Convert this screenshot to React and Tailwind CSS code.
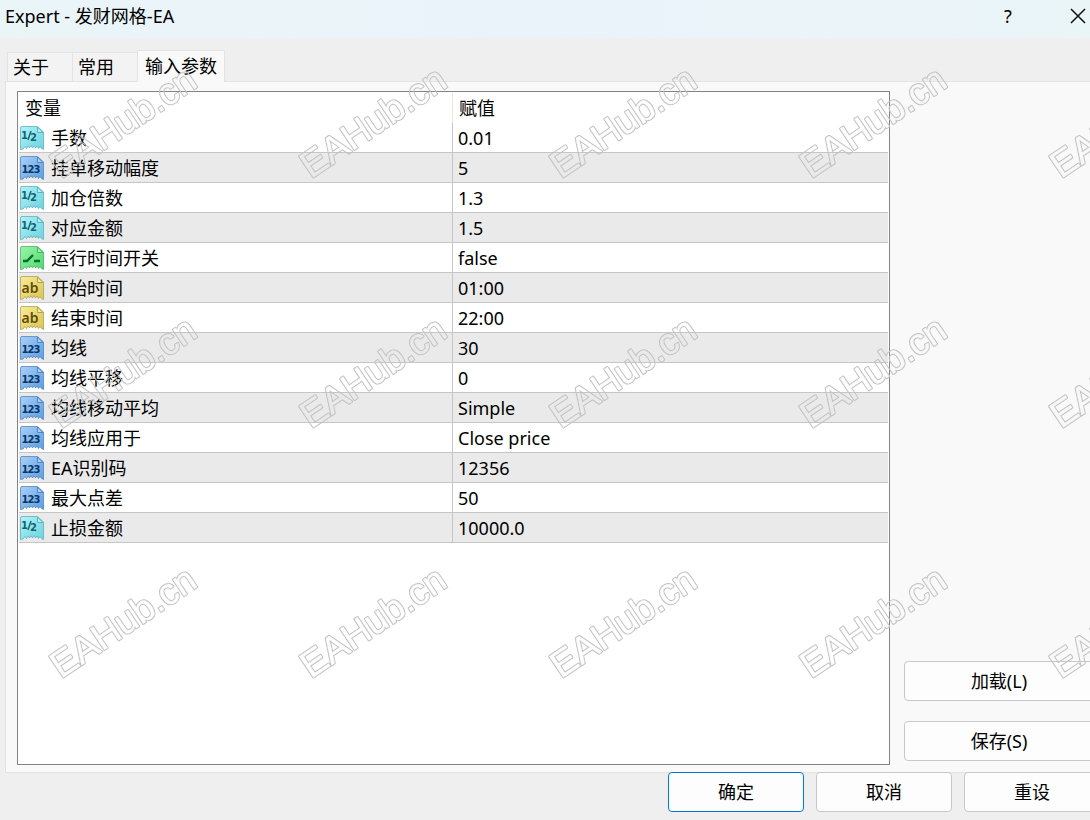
import React, { useState } from 'react';

const tabs = ['关于', '常用', '输入参数'];

const params = [
    { name: '手数', value: '0.01', type: 'double' },
    { name: '挂单移动幅度', value: '5', type: 'int' },
    { name: '加仓倍数', value: '1.3', type: 'double' },
    { name: '对应金额', value: '1.5', type: 'double' },
    { name: '运行时间开关', value: 'false', type: 'bool' },
    { name: '开始时间', value: '01:00', type: 'string' },
    { name: '结束时间', value: '22:00', type: 'string' },
    { name: '均线', value: '30', type: 'int' },
    { name: '均线平移', value: '0', type: 'int' },
    { name: '均线移动平均', value: 'Simple', type: 'int' },
    { name: '均线应用于', value: 'Close price', type: 'int' },
    { name: 'EA识别码', value: '12356', type: 'int' },
    { name: '最大点差', value: '50', type: 'int' },
    { name: '止损金额', value: '10000.0', type: 'double' },
];

const iconColors = {
    double: { light: '#b4f1f7', dark: '#6bd3df', edge: '#5fb2bf', ink: '#0d6672' },
    int: { light: '#a9d0f8', dark: '#5b9ee2', edge: '#5585bd', ink: '#0c3566' },
    bool: { light: '#9af5a8', dark: '#4ed872', edge: '#4bb565', ink: '#0c6b25' },
    string: { light: '#f7ec9c', dark: '#dcc44f', edge: '#b3a252', ink: '#5e4c05' },
};

const TypeIcon = ({ type }) => {
    const c = iconColors[type];
    return (
        <svg className="h-6 w-6 shrink-0" viewBox="0 0 24 24" aria-hidden="true">
            <defs>
                <linearGradient id={'fill-' + type} x1="0" y1="0" x2="1" y2="1">
                    <stop offset="0" stopColor={c.light} />
                    <stop offset="1" stopColor={c.dark} />
                </linearGradient>
            </defs>
            <path
                d="M2 .5H17.5L23.5 6V23.5L21.5 22.5L20 20.5L18.5 22.5L17 20L15.5 22L14 19.5L12.5 22L11 19.5L9.5 22L8 20L6.500 22.5L5 20.5L3 23L.5 23.5V2Q.5 .5 2 .5Z"
                fill={`url(#fill-${type})`}
                stroke={c.edge}
                strokeWidth=".8"
            />
            <path d="M17.5 1V6.5H23Z" fill={c.light} stroke={c.edge} strokeLinejoin="round" />
            {type === 'int' && (
                <text y="17" textAnchor="middle" fontSize="10" fontWeight="700" fontFamily="DejaVu Sans" fill={c.ink}>
                    <tspan x="5">1</tspan><tspan x="11">2</tspan><tspan x="17">3</tspan>
                </text>
            )}
            {type === 'double' && (
                <g fill={c.ink} fontSize="10" fontWeight="700" fontFamily="DejaVu Sans">
                    <text x="1" y="13">1</text>
                    <text x="10" y="15">2</text>
                    <path d="M11 5L8 14" stroke={c.ink} strokeWidth="1.4" />
                </g>
            )}
            {type === 'bool' && (
                <path d="M3 15H7L13 9M14 15H20" fill="none" stroke={c.ink} strokeWidth="2.4" />
            )}
            {type === 'string' && (
                <text x="10" y="17" textAnchor="middle" fontSize="14" fontWeight="600" fontFamily="Noto Sans" fill={c.ink}>ab</text>
            )}
        </svg>
    );
};

// Outlined site mark, repeated every 250px over the whole window
const Watermark = () => (
    <svg className="pointer-events-none absolute inset-0 z-20 h-full w-full" aria-hidden="true">
        <defs>
            <mask id="ring" maskUnits="userSpaceOnUse" x="-10" y="-50" width="200" height="70">
                <rect x="-10" y="-50" width="200" height="70" fill="#fff" />
                <text fontSize="37" fontFamily="Liberation Sans" stroke="#000" strokeWidth=".4" strokeLinejoin="round">EAHub.cn</text>
            </mask>
            <pattern id="mark" width="250" height="250" patternUnits="userSpaceOnUse" x="40" y="-60">
                <g transform="translate(21 239) rotate(-34)">
                    <text fontSize="37" fontFamily="Liberation Sans" fill="none" stroke="#c2c2c2" strokeWidth="2.4" strokeLinejoin="round" mask="url(#ring)">EAHub.cn</text>
                </g>
            </pattern>
        </defs>
        <rect width="100%" height="100%" fill="url(#mark)" />
    </svg>
);

const DialogButton = ({ children, className }) => (
    <button type="button" className={`h-10 shrink-0 rounded-sm border bg-[#fdfdfd] ${className}`}>
        {children}
    </button>
);

const App = () => {
    const [active, setActive] = useState(2);

    return (
        <div className="relative flex min-h-screen flex-col overflow-hidden bg-[#efefef] font-['Noto_Sans','Noto_Sans_CJK_SC',sans-serif] text-[18px] leading-[28px] text-black">
            <header className="flex h-[38px] items-start justify-between bg-linear-to-r from-[#eaf5f8] via-[#ebf3fa] to-[#eaf5f8] pl-[5px] pt-[2px]">
                <h1>Expert - 发财网格-EA</h1>
                <div className="flex">
                    <button type="button" aria-label="Help" className="h-7 w-10">?</button>
                    <button type="button" aria-label="Close" className="ml-[38px] flex h-7 w-6 items-center justify-center">
                        <svg className="h-4 w-4" viewBox="0 0 16 16" fill="none" stroke="#111" strokeWidth="1.5">
                            <path d="M1 1L15 15M15 1L1 15" />
                        </svg>
                    </button>
                </div>
            </header>

            <div role="tablist" className="mt-3 flex items-end pl-[7px]">
                {tabs.map((tab, i) => (
                    <button
                        key={tab}
                        type="button"
                        role="tab"
                        aria-selected={active === i}
                        onClick={() => setActive(i)}
                        className={active === i
                            ? 'relative z-10 -mb-px h-8 border border-b-0 border-[#e3e3e3] bg-[#f9f9f9] px-[7px] pb-[2px]'
                            : 'h-[29px] w-[65px] border-l border-t border-[#e3e3e3] bg-[#f3f3f3] pl-[5px] text-left'}
                    >
                        {tab}
                    </button>
                ))}
            </div>

            <main className="ml-[5px] flex flex-1 border border-r-0 border-[#e3e3e3] bg-[#f9f9f9] pb-[7px] pl-[11px] pt-[9px]">
                <div className="flex-1 border border-[#82838c] bg-white p-px">
                    <table className="w-full table-fixed border-separate border-spacing-0">
                        <thead>
                            <tr className="h-[30px] text-left">
                                <th className="w-[434px] border-r border-[#e5e5e5] p-0 pl-[6px] font-normal">变量</th>
                                <th className="p-0 pl-[6px] font-normal">赋值</th>
                            </tr>
                        </thead>
                        <tbody>
                            {params.map((p) => (
                                <tr key={p.name} className="h-[30px] even:bg-[#eaeaea]">
                                    <td className="border-b border-r border-[#c6c6c6] p-0 pl-px">
                                        <div className="flex items-center gap-[7px]">
                                            <TypeIcon type={p.type} />
                                            <span>{p.name}</span>
                                        </div>
                                    </td>
                                    <td className="border-b border-[#c6c6c6] p-0 pl-[5px]">{p.value}</td>
                                </tr>
                            ))}
                        </tbody>
                    </table>
                </div>
                <aside className="ml-[14px] flex w-[186px] shrink-0 flex-col justify-end gap-5 pb-[4px]">
                    <DialogButton className="w-[190px] border-[#c8c8c8]">加载(L)</DialogButton>
                    <DialogButton className="w-[190px] border-[#c8c8c8]">保存(S)</DialogButton>
                </aside>
            </main>

            <footer className="relative -mr-[10px] -mt-px flex h-12 justify-end gap-3">
                <DialogButton className="w-[136px] border-[#0078d4]">确定</DialogButton>
                <DialogButton className="w-[136px] border-[#c8c8c8]">取消</DialogButton>
                <DialogButton className="w-[136px] border-[#c8c8c8]">重设</DialogButton>
            </footer>

            <Watermark />
        </div>
    );
};

export default App;
